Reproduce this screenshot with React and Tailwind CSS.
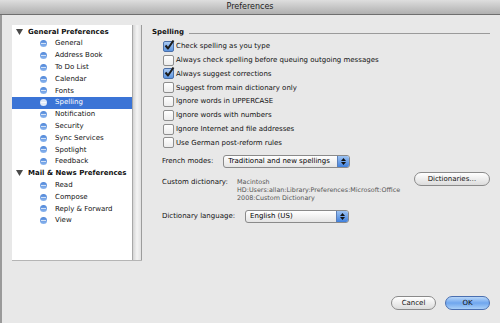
import React from 'react'

const generalItems = ['General', 'Address Book', 'To Do List', 'Calendar', 'Fonts', 'Spelling', 'Notification', 'Security', 'Sync Services', 'Spotlight', 'Feedback']
const mailItems = ['Read', 'Compose', 'Reply & Forward', 'View']

const options = [
  { label: 'Check spelling as you type', checked: true },
  { label: 'Always check spelling before queuing outgoing messages', checked: false },
  { label: 'Always suggest corrections', checked: true },
  { label: 'Suggest from main dictionary only', checked: false },
  { label: 'Ignore words in UPPERCASE', checked: false },
  { label: 'Ignore words with numbers', checked: false },
  { label: 'Ignore Internet and file addresses', checked: false },
  { label: 'Use German post-reform rules', checked: false },
]

function Bullet({ selected }) {
  return (
    <span className={`inline-block shrink-0 w-[7px] h-[7px] rounded-full ${selected ? 'bg-[#dfe8f7]' : 'bg-gradient-to-b from-[#4f86d8] to-[#8bb5ee]'} relative`}>
      <span className="absolute left-[1px] right-[1px] top-[3px] h-[1px] bg-white/70" />
    </span>
  )
}

function Triangle() {
  return (
    <svg width="7" height="6" viewBox="0 0 7 6" className="shrink-0">
      <path d="M0 0 L7 0 L3.5 6 Z" fill="#4a4a4a" />
    </svg>
  )
}

function Checkbox({ checked }) {
  return (
    <span className={`relative w-[11px] h-[11px] rounded-[2px] border ${checked ? 'border-[#4a6fa8] bg-gradient-to-b from-[#a9c9f2] to-[#5d95e0]' : 'border-[#8e8e8e] bg-gradient-to-b from-white to-[#ececec]'} shrink-0`}>
      {checked && (
        <svg width="12" height="12" viewBox="0 0 12 12" className="absolute -left-[1px] -top-[3px]">
          <path d="M2.5 6.5 L5 9.5 L10.5 1.5" stroke="#1b1b1b" strokeWidth="2" fill="none" strokeLinejoin="round" />
        </svg>
      )}
    </span>
  )
}

function Popup({ value, width }) {
  return (
    <div className={`${width} h-[13px] flex items-stretch rounded-[3px] border border-[#8a8a8a] bg-gradient-to-b from-white to-[#e4e4e4] overflow-hidden shrink-0`}>
      <span className="flex-1 pl-[4px] leading-[11px] text-black whitespace-nowrap">{value}</span>
      <span className="w-[12px] flex flex-col items-center justify-center gap-[1px] bg-gradient-to-b from-[#9dc3f2] to-[#3f80dd] border-l border-[#5b7fb8]">
        <svg width="5" height="3" viewBox="0 0 5 3"><path d="M0 3 L2.5 0 L5 3 Z" fill="#111" /></svg>
        <svg width="5" height="3" viewBox="0 0 5 3"><path d="M0 0 L2.5 3 L5 0 Z" fill="#111" /></svg>
      </span>
    </div>
  )
}

export default function App() {
  return (
    <div className="w-[500px] h-[323px] bg-[#e8e8e8] flex flex-col overflow-hidden text-[7px] text-[#111] whitespace-nowrap" style={{ fontFamily: '"DejaVu Sans", "Liberation Sans", sans-serif' }}>
      <div className="h-[15px] shrink-0 bg-gradient-to-b from-[#dedede] to-[#b0b0b0] border-b border-[#6f6f6f] flex items-center justify-center text-[8px] text-[#222]">
        Preferences
      </div>
      <div className="flex-1 flex border-l-2 border-[#9a9a9a]">
        <div className="ml-[10px] mt-[10px] w-[130px] h-[236px] flex border-b border-[#b5b5b5] bg-white shrink-0">
          <div className="flex-1 pt-[1px]">
            <div className="h-[11.8px] flex items-center gap-[5px] pl-[4px] font-bold">
              <Triangle />
              <span>General Preferences</span>
            </div>
            {generalItems.map((item) => {
              const selected = item === 'Spelling'
              return (
                <div key={item} className={`h-[11.8px] flex items-center pl-[28px] gap-[8px] ${selected ? 'bg-[#3b74d6] text-white' : ''}`}>
                  <Bullet selected={selected} />
                  <span>{item}</span>
                </div>
              )
            })}
            <div className="h-[11.8px] flex items-center gap-[5px] pl-[4px] font-bold">
              <Triangle />
              <span>Mail &amp; News Preferences</span>
            </div>
            {mailItems.map((item) => (
              <div key={item} className="h-[11.8px] flex items-center pl-[28px] gap-[8px]">
                <Bullet />
                <span>{item}</span>
              </div>
            ))}
          </div>
          <div className="w-[10px] border-l border-[#a8a8a8] border-r border-r-[#9c9c9c] bg-gradient-to-r from-[#d4d4d4] via-[#f4f4f4] to-[#e2e2e2]" />
        </div>

        <div className="flex-1 pl-[10px] pr-[10px] pt-[12px] flex flex-col">
          <div className="flex items-center gap-[5px]">
            <span className="font-bold">Spelling</span>
            <span className="flex-1 h-[1px] bg-[#9a9a9a] mt-[2px]" />
          </div>
          <div className="pl-[11px] pt-[2px] flex flex-col">
            {options.map((o) => (
              <div key={o.label} className="h-[13.8px] flex items-center gap-[2px]">
                <Checkbox checked={o.checked} />
                <span>{o.label}</span>
              </div>
            ))}
          </div>
          <div className="pl-[10px] pt-[5px] flex items-center gap-[10px]">
            <span>French modes:</span>
            <Popup value="Traditional and new spellings" width="w-[127px]" />
          </div>
          <div className="pl-[10px] pt-[9px] flex items-start">
            <span className="w-[75px]">Custom dictionary:</span>
            <div className="text-[6.4px] leading-[8px] text-[#555] w-[176px] mt-[1px]">
              <div>Macintosh</div>
              <div>HD:Users:allan:Library:Preferences:Microsoft:Office</div>
              <div>2008:Custom Dictionary</div>
            </div>
            <button className="ml-auto -mt-[5px] w-[76px] h-[14px] rounded-full border border-[#8a8a8a] bg-gradient-to-b from-white to-[#dcdcdc] text-[#111]">
              Dictionaries…
            </button>
          </div>
          <div className="pl-[10px] pt-[8px] flex items-center gap-[10px]">
            <span>Dictionary language:</span>
            <Popup value="English (US)" width="w-[104px]" />
          </div>
          <div className="mt-auto mb-[13px] flex justify-end gap-[9px]">
            <button className="w-[45px] h-[14px] rounded-full border border-[#8a8a8a] bg-gradient-to-b from-white to-[#dcdcdc]">Cancel</button>
            <button className="w-[45px] h-[14px] rounded-full border border-[#4a6fb0] bg-gradient-to-b from-[#b8d6f8] via-[#6fa6ee] to-[#a9cff7]">OK</button>
          </div>
        </div>
      </div>
    </div>
  )
}
